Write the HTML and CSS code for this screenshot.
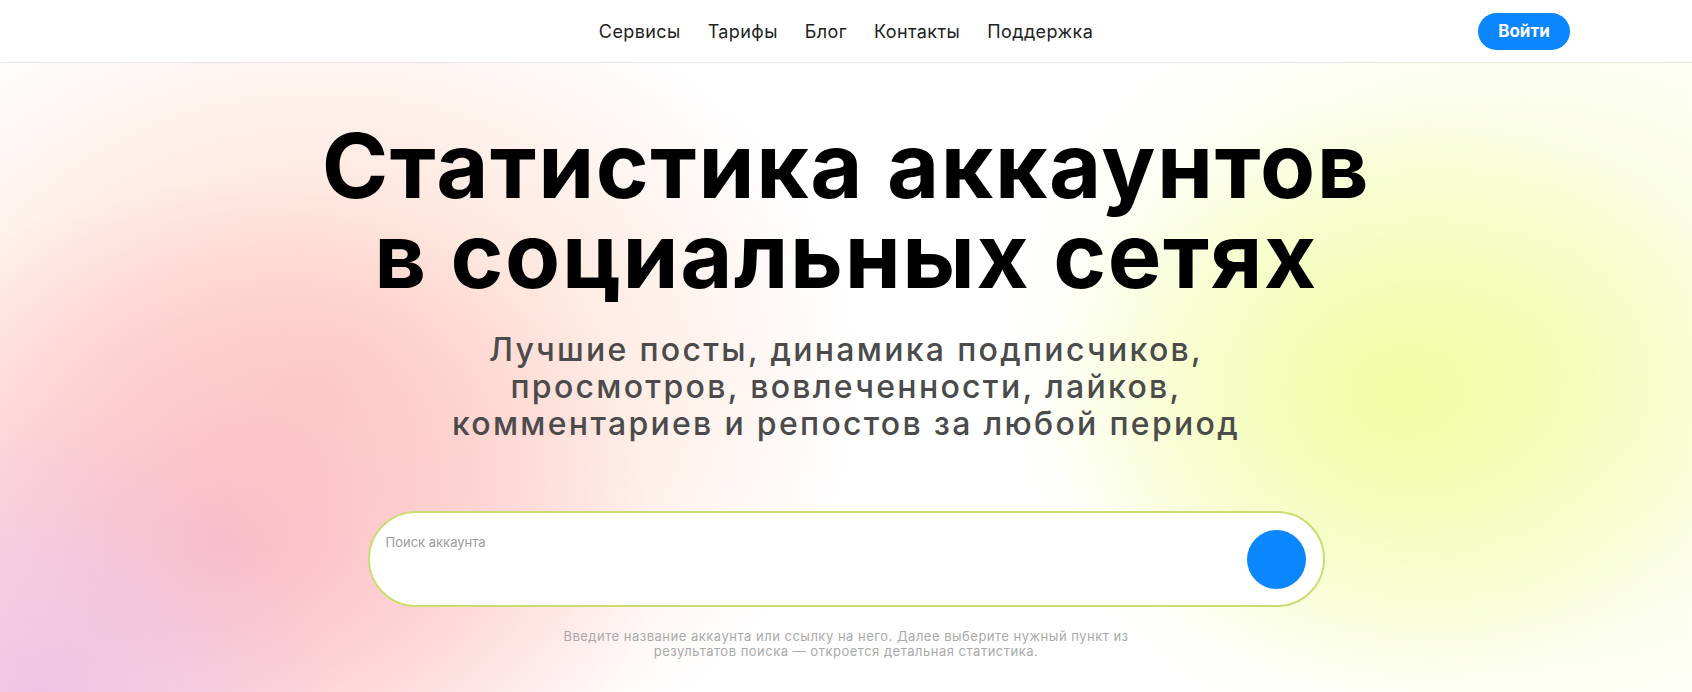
FILE: index.html
```html
<!DOCTYPE html>
<html lang="ru">
<head>
  <meta charset="UTF-8">
  <title>Статистика аккаунтов в социальных сетях</title>
  <link rel="stylesheet" href="styles.css">
</head>
<body>
  <!-- Top header -->
  <header class="header">
    <div class="header-left"></div>
    <nav class="nav">
      <a href="#" class="nav-link">Сервисы</a>
      <a href="#" class="nav-link">Тарифы</a>
      <a href="#" class="nav-link">Блог</a>
      <a href="#" class="nav-link">Контакты</a>
      <a href="#" class="nav-link">Поддержка</a>
    </nav>
    <div class="header-right">
      <button class="login-btn">Войти</button>
    </div>
  </header>

  <!-- Hero -->
  <main class="hero">
    <h1 class="hero-title">Статистика аккаунтов<br>в социальных сетях</h1>
    <p class="hero-sub">Лучшие посты, динамика подписчиков,<br>просмотров, вовлеченности, лайков,<br>комментариев и репостов за любой период</p>

    <form class="search">
      <label class="search-label" for="q">Поиск аккаунта</label>
      <input class="search-input" id="q" type="text">
      <button type="button" class="search-btn"></button>
    </form>

    <p class="hint">Введите название аккаунта или ссылку на него. Далее выберите нужный пункт из результатов поиска — откроется детальная статистика.</p>
  </main>
</body>
</html>
```

FILE: styles.css
```css
/* Base reset */
* { margin: 0; padding: 0; box-sizing: border-box; }
html, body { height: 100%; }
body { font-family: Inter, "Noto Sans", sans-serif; background-color: #fff; overflow: hidden; color: #000; }

/* Header */
.header {
  display: grid; grid-template-columns: 1fr auto 1fr; align-items: center;
  height: 63px; padding: 0 122px; background-color: #fff;
  border-bottom: 1px solid #e6e6e6;
}
.nav { display: flex; gap: 27px; }
.nav-link { color: #222; text-decoration: none; font-size: 18px; font-weight: 400; letter-spacing: 0.4px; }
.header-right { display: flex; justify-content: flex-end; }
.login-btn {
  width: 92px; height: 37px; border: none; border-radius: 19px;
  background-color: #0a86ff; color: #fff; font-family: inherit;
  font-size: 17px; font-weight: 700; cursor: pointer;
}

/* Hero with soft colour blobs */
.hero {
  display: flex; flex-direction: column; align-items: center;
  height: calc(100% - 63px); padding-top: 58px; text-align: center;
  background-color: #fff;
  background-image:
    radial-gradient(ellipse 360px 300px at 1400px 330px, rgba(240, 252, 160, 0.95), rgba(240, 252, 160, 0) 100%),
    radial-gradient(ellipse 520px 420px at 1520px 300px, rgba(246, 252, 200, 0.9), rgba(246, 252, 200, 0) 100%),
    radial-gradient(ellipse 300px 300px at 40px 640px, rgba(236, 196, 228, 1), rgba(236, 196, 228, 0) 100%),
    radial-gradient(ellipse 440px 360px at 220px 480px, rgba(252, 188, 198, 1), rgba(252, 188, 198, 0) 100%),
    radial-gradient(ellipse 540px 420px at 320px 320px, rgba(253, 210, 194, 0.95), rgba(253, 210, 194, 0) 100%);
}
.hero-title {
  font-size: 90px; line-height: 90px; font-weight: 700; letter-spacing: 1.6px;
}
.hero-sub {
  margin-top: 30px; font-size: 32px; line-height: 37px; font-weight: 500;
  letter-spacing: 2.3px; color: #4b4b4b;
}

/* Search field */
.search {
  position: relative; display: flex; align-items: center;
  width: 957px; height: 96px; margin-top: 69px; padding: 0 17px 0 18px;
  background-color: #fff; border: 2px solid #c9dd70; border-radius: 48px;
}
.search-label {
  position: absolute; left: 16px; top: 21px;
  font-size: 13px; color: #9b9b9b;
}
.search-input {
  flex-grow: 1; height: 100%; border: none; outline: none; background: transparent;
  font-family: inherit; font-size: 18px; padding-top: 20px;
}
.search-btn {
  width: 59px; height: 59px; border: none; border-radius: 50%;
  background-color: #0a86ff; cursor: pointer;
}

.hint {
  width: 600px; margin-top: 22px; font-size: 13px; line-height: 15px;
  letter-spacing: 0.5px; color: #a9a9a9;
}
```
